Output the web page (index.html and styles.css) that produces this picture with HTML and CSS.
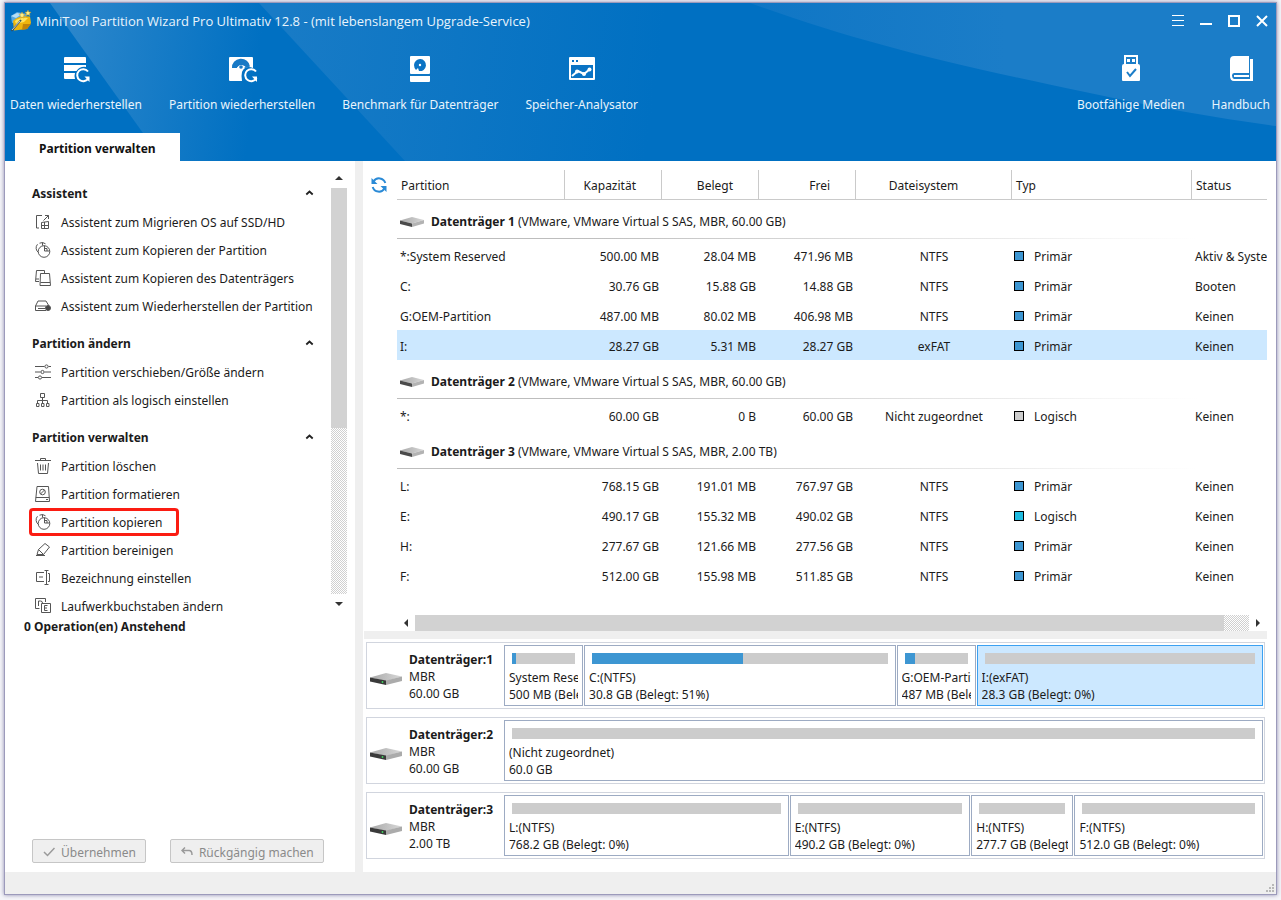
FILE: index.html
```html
<!DOCTYPE html>
<html lang="de">
<head>
<meta charset="utf-8">
<meta name="viewport" content="width=device-width, initial-scale=1">
<title>MiniTool Partition Wizard Pro Ultimativ 12.8</title>
<link rel="stylesheet" href="styles.css">
</head>
<body>
<svg class="defs" aria-hidden="true">
  <defs>
    <linearGradient id="diskTop" x1="0" x2="1" y1="0" y2="0"><stop offset="0" stop-color="#a8a8a8"/><stop offset="1" stop-color="#d8d8d8"/></linearGradient>
    <symbol id="disk" viewBox="0 0 32 14">
      <path d="M0 5.500 16 1 32 4.500 16 9z" fill="url(#diskTop)"/>
      <path d="M0 5.500 16 8.500V13L0 9.500z" fill="#3a3a3a"/>
      <path d="M16 8.500 32 4.500V9L16 13z" fill="#ababab"/>
      <path d="M12.500 9v2" stroke="#3fc65a" stroke-width="1.500"/>
    </symbol>
    <symbol id="drive" viewBox="0 0 26 12">
      <path d="M1 4.500 13 1 25 4 13 7.500z" fill="url(#diskTop)"/>
      <path d="M1 4.500 13 7.500V11L1 8z" fill="#4a4a4a"/>
      <path d="M13 7.500 25 4V7.500L13 11z" fill="#b3b3b3"/>
    </symbol>
    <symbol id="copy" viewBox="0 0 16 16">
      <path d="M3.500 10.500A5.500 5.500 0 0 1 2.500 2.300M4.500 1.200A5.500 5.500 0 0 1 10.500 1.800M7.500.500v3"/>
      <circle cx="9" cy="9.500" r="5.800"/><path d="M9.500 3.700V9h5.200M9.500 6.500H12V9"/>
    </symbol>
    <symbol id="chev" viewBox="0 0 8 6"><path d="M.8 4.500 4 1.500 7.200 4.500" fill="none" stroke="#222" stroke-width="1.800"/></symbol>
  </defs>
</svg>
<div class="window">
  <header class="header">
    <svg class="header-art" viewBox="0 0 1271 158" preserveAspectRatio="none" aria-hidden="true">
      <defs>
        <linearGradient id="b1" gradientUnits="userSpaceOnUse" x1="60" y1="60" x2="250" y2="85"><stop offset="0" stop-color="#2b86cb"/><stop offset="1" stop-color="#0070c2"/></linearGradient>
        <linearGradient id="b2" gradientUnits="userSpaceOnUse" x1="280" y1="40" x2="650" y2="90"><stop offset="0" stop-color="#187bc6"/><stop offset="1" stop-color="#0070c2"/></linearGradient>
        <linearGradient id="b3" gradientUnits="userSpaceOnUse" x1="745" y1="0" x2="1000" y2="0"><stop offset="0" stop-color="#0f76c5"/><stop offset="1" stop-color="#1b7dc8"/></linearGradient>
      </defs>
      <path d="M45 0H254L400 158H158z" fill="url(#b1)"/>
      <path d="M254 0H800V158H400z" fill="url(#b2)"/>
      <path d="M745 0C850 38 940 60 1080 89Q1180 111 1271 123V0z" fill="url(#b3)"/>
    </svg>
    <div class="titlebar">
      <svg class="app-icon" width="22" height="22" viewBox="0 0 22 22" aria-hidden="true">
        <path d="M1 6 7 2l10 2-3 6-12 3z" fill="#5aa9df"/><path d="M1 6 7 3l5 1-6 4z" fill="#b5def5"/>
        <path d="M3 11Q8 5 20 6.500L21 13 17 19 4 20.500z" fill="#eeb50d"/><path d="M5 11Q10 7 18 8l-4 4-8 2z" fill="#ffe35b"/><path d="M13 14h8l-4 5-5 1z" fill="#c18409"/>
        <path d="M1.500 21 11 10" stroke="#345064" stroke-width="1.800"/><path d="M2 20 10 11" stroke="#fff" stroke-width=".7"/>
        <path d="m12 2 1 2 2 .3-1.500 1.700.5 2-2-1-2 1 .5-2L9 4.300l2-.3zM18 0l.8 2 2.200.2-1.500 1.500.5 2-2-1-2 1 .5-2L15 2.200l2-.2z" fill="#ffef86" stroke="#b89121" stroke-width=".5"/>
      </svg>
      <h1 class="title">MiniTool Partition Wizard Pro Ultimativ 12.8 - (mit lebenslangem Upgrade-Service)</h1>
      <div class="controls">
        <button type="button" aria-label="Menü"><svg width="12" height="12" viewBox="0 0 12 12"><path d="M0 .5h12M0 5.500h12M0 10.500h12" stroke="#fff"/></svg></button>
        <button type="button" aria-label="Minimieren"><svg width="12" height="12" viewBox="0 0 12 12"><path d="M0 9h12" stroke="#fff" stroke-width="2"/></svg></button>
        <button type="button" aria-label="Maximieren"><svg width="12" height="12" viewBox="0 0 12 12"><path d="M1 1h10v10H1z" fill="none" stroke="#fff" stroke-width="2"/></svg></button>
        <button type="button" aria-label="Schließen"><svg width="12" height="12" viewBox="0 0 12 12"><path d="m1 1 10 10M11 1 1 11" stroke="#fff" stroke-width="2"/></svg></button>
      </div>
    </div>
    <nav class="toolbar">
      <button class="tool" type="button">
        <svg width="30" height="30" viewBox="0 0 30 30"><path d="M3 4q0-1 1-1h20q1 0 1 1v5H3zM3 11h22v2q-6-1-9.500 4H3zM3 19h11q-1 3 0 6H4q-1 0-1-1z" fill="#fff"/><path d="M27 17.500A6 6 0 1 0 27.500 24" fill="none" stroke="#fff" stroke-width="2"/><path d="M23.500 22.500h5V28z" fill="#fff"/></svg>
        <span>Daten wiederherstellen</span></button>
      <button class="tool" type="button">
        <svg width="32" height="30" viewBox="0 0 32 30"><path d="M3 4q0-1 1-1h22q1 0 1 1v10q-8-3-11 4-1 4 0 9H4q-1 0-1-1z" fill="#fff"/><path d="M6 14A9 8.500 0 0 1 24 12.500L19 14Q15 8 11 14z" fill="#1879c5"/><path d="M10.500 14.500Q14 8.500 19.500 12.500L16 15z" fill="#fff"/><circle cx="15" cy="13" r="1.800" fill="#1879c5"/><path d="M30 17.500A6 6 0 1 0 30.500 24" fill="none" stroke="#fff" stroke-width="2"/><path d="M26 22.500h5V28z" fill="#fff"/></svg>
        <span>Partition wiederherstellen</span></button>
      <button class="tool" type="button">
        <svg width="30" height="30" viewBox="0 0 30 30"><path d="M5 3q0-1 1-1h18q1 0 1 1v16q0 1-1 1H6q-1 0-1-1z" fill="#fff"/><path d="M5 22h20v5q0 1-1 1H6q-1 0-1-1z" fill="#fff"/><path d="M9 11a6 6 0 1 1 5 6l-1-3-2 2q-2-2-2-5z" fill="#0b73c4"/><circle cx="15" cy="11" r="1.200" fill="#fff"/></svg>
        <span>Benchmark für Datenträger</span></button>
      <button class="tool" type="button">
        <svg width="30" height="30" viewBox="0 0 30 30"><path d="M2 4q0-1 1-1h24q1 0 1 1v21q0 1-1 1H3q-1 0-1-1z" fill="#fff"/><path d="M4 11h22v13H4zM5 6h2v2H5zM9 6h2v2H9z" fill="#0a73c4"/><path d="m5 22 6-5 6 3 6-5" fill="none" stroke="#fff" stroke-width="2"/><circle cx="10" cy="17.500" r="2" fill="#fff"/><circle cx="17" cy="20" r="2" fill="#fff"/><circle cx="22.500" cy="15.500" r="2" fill="#fff"/></svg>
        <span>Speicher-Analysator</span></button>
      <span class="spring"></span>
      <button class="tool" type="button">
        <svg width="30" height="30" viewBox="0 0 30 30"><path d="M9 10V2h12v8" fill="none" stroke="#fff" stroke-width="2"/><path d="M11 5h3v3h-3zM16 5h3v3h-3zM6 12q0-2 2-2h14q2 0 2 2v14q0 1-1 1H7q-1 0-1-1z" fill="#fff"/><path d="m11 18 3 4 6-7" fill="none" stroke="#1b7dc8" stroke-width="2"/></svg>
        <span>Bootfähige Medien</span></button>
      <button class="tool" type="button">
        <svg width="30" height="30" viewBox="0 0 30 30"><path d="M4 6q0-4 4-4h15v17H8q-2 0-2 2.500T8 25h16V5h3v22H8q-4 0-4-5z" fill="#fff"/><path d="M8 22h15" stroke="#fff" stroke-width="2"/></svg>
        <span>Handbuch</span></button>
    </nav>
    <div class="tabs"><button class="tab" type="button">Partition verwalten</button></div>
  </header>

  <div class="body">
    <aside class="sidebar">
      <div class="scroll">
        <div class="groups">
          <h2 class="group">Assistent<svg width="9" height="6"><use href="#chev"/></svg></h2>
          <button class="action" type="button"><svg class="ico" viewBox="0 0 16 16"><path d="M7 1.500H1.500v12.500H4M8.500 6.500l5-5M10 1.500h3.500V5M6.500 8.500l7-1v7h-7zM6.500 11.500h7M9.500 8v6.500"/></svg>Assistent zum Migrieren OS auf SSD/HD</button>
          <button class="action" type="button"><svg class="ico"><use href="#copy"/></svg>Assistent zum Kopieren der Partition</button>
          <button class="action" type="button"><svg class="ico" viewBox="0 0 16 16"><path d="M4 11.500H.5L1.500.5h8V3M1 9h3M5.500 3.500h9l1 12H5zM5.500 12.500h9.500"/></svg>Assistent zum Kopieren des Datenträgers</button>
          <button class="action" type="button"><svg class="ico" viewBox="0 0 16 16"><path d="m.5 8 2.500-5h8l3 5M.5 8v4.500H11M.5 8H11M3 10.500h7"/><circle cx="13" cy="10" r="2.500" fill="#444"/></svg>Assistent zum Wiederherstellen der Partition</button>
          <h2 class="group">Partition ändern<svg width="9" height="6"><use href="#chev"/></svg></h2>
          <button class="action" type="button"><svg class="ico" viewBox="0 0 16 16"><path d="M0 2.500h9.500M13.500 2.500H16M0 8h5.500M9.500 8H16M0 13.500h3M7 13.500h9"/><circle cx="11.500" cy="2.500" r="1.600"/><circle cx="7.500" cy="8" r="1.600"/><circle cx="5" cy="13.500" r="1.600"/></svg>Partition verschieben/Größe ändern</button>
          <button class="action" type="button"><svg class="ico" viewBox="0 0 16 16"><path d="M5.500 1.500h4v4h-4zM7.500 5.500v6M2.500 11.500v-3h10v3M1.500 11.500h2.500v3H1.500zM6.500 11.500H9v3H6.500zM11.500 11.500H14v3h-2.500z"/></svg>Partition als logisch einstellen</button>
          <h2 class="group">Partition verwalten<svg width="9" height="6"><use href="#chev"/></svg></h2>
          <button class="action" type="button"><svg class="ico" viewBox="0 0 16 16"><path d="M0 2.500h16M5.500 2V.500h5V2M2.500 5l1 10.500h9l1-10.500M5.500 6.500v6M8 6.500v6M10.500 6.500v6"/></svg>Partition löschen</button>
          <button class="action" type="button"><svg class="ico" viewBox="0 0 16 16"><path d="M2 .5h11.500l1 15H.5zM.8 11.500h13.500M11 13.500h2M5.500 8l4-4"/><circle cx="7.500" cy="6" r="2.800"/></svg>Partition formatieren</button>
          <button class="action marked" type="button"><svg class="ico"><use href="#copy"/></svg>Partition kopieren</button>
          <button class="action" type="button"><svg class="ico" viewBox="0 0 16 16"><path d="m3.500 7.500 6.500-6 4.500 3.500-6 7.500zM3.500 7.500l-1.500 5h6.500M1 13.500h9"/></svg>Partition bereinigen</button>
          <button class="action" type="button"><svg class="ico" viewBox="0 0 16 16"><path d="M9 2.500H1.500v9H9M4 7h4M11.500 1v13M9.500.500h4M9.500 14.500h4M13 3.500h1.500v8H13"/></svg>Bezeichnung einstellen</button>
          <button class="action" type="button"><svg class="ico" viewBox="0 0 16 16"><path d="M4.500 10.500H.5V.500h10V4M3.500 3v5M3.500 3h2q2 0 2 2M6.500 5.500h9v9h-9zM12.500 7.500h-3v5h3M9.500 10h2.500"/></svg>Laufwerkbuchstaben ändern</button>
        </div>
        <div class="vbar"><button type="button" aria-label="Nach oben"><svg width="8" height="4"><path d="M0 4 4 0l4 4z"/></svg></button><div class="track"><div class="thumb"></div></div><button type="button" aria-label="Nach unten"><svg width="8" height="4"><path d="M0 0h8L4 4z"/></svg></button></div>
      </div>
      <p class="pending">0 Operation(en) Anstehend</p>
      <div class="buttons">
        <button class="btn" type="button" disabled><svg width="12" height="10" viewBox="0 0 12 10"><path d="m1 5 3.500 3.500L11.500 1"/></svg>Übernehmen</button>
        <button class="btn" type="button" disabled><svg width="12" height="10" viewBox="0 0 12 10"><path d="M4 .5 1 3.500l3 3M1 3.500h7q3 0 3 4.500"/></svg>Rückgängig machen</button>
      </div>
    </aside>

    <main class="main">
      <section class="list">
        <button class="refresh" type="button" aria-label="Aktualisieren"><svg width="16" height="16" viewBox="0 0 16 16"><path d="M14.300 6A6.500 6.500 0 0 0 2.500 4.500M1.700 10a6.500 6.500 0 0 0 11.800 1.500" fill="none" stroke="#2a8ad6" stroke-width="2"/><path d="M.500 1v6h6zM15.500 15V9h-6z" fill="#2a8ad6"/></svg></button>
        <div class="table-wrap">
        <table class="table">
          <colgroup><col class="c-name"><col class="c-num"><col class="c-num"><col class="c-num"><col class="c-fs"><col class="c-type"><col></colgroup>
          <thead><tr><th>Partition</th><th class="num">Kapazität</th><th class="num">Belegt</th><th class="num">Frei</th><th class="fs">Dateisystem</th><th>Typ</th><th>Status</th></tr></thead>
          <tbody>
            <tr class="disk-row"><td colspan="7"><div class="disk-title"><svg width="26" height="12"><use href="#drive"/></svg><span><b>Datenträger 1</b> (VMware, VMware Virtual S SAS, MBR, 60.00 GB)</span></div></td></tr>
            <tr><td>*:System Reserved</td><td class="num">500.00 MB</td><td class="num">28.04 MB</td><td class="num">471.96 MB</td><td class="fs">NTFS</td><td><i class="sw"></i>Primär</td><td>Aktiv &amp; System</td></tr>
            <tr><td>C:</td><td class="num">30.76 GB</td><td class="num">15.88 GB</td><td class="num">14.88 GB</td><td class="fs">NTFS</td><td><i class="sw"></i>Primär</td><td>Booten</td></tr>
            <tr><td>G:OEM-Partition</td><td class="num">487.00 MB</td><td class="num">80.02 MB</td><td class="num">406.98 MB</td><td class="fs">NTFS</td><td><i class="sw"></i>Primär</td><td>Keinen</td></tr>
            <tr class="selected"><td>I:</td><td class="num">28.27 GB</td><td class="num">5.31 MB</td><td class="num">28.27 GB</td><td class="fs">exFAT</td><td><i class="sw"></i>Primär</td><td>Keinen</td></tr>
            <tr class="disk-row"><td colspan="7"><div class="disk-title"><svg width="26" height="12"><use href="#drive"/></svg><span><b>Datenträger 2</b> (VMware, VMware Virtual S SAS, MBR, 60.00 GB)</span></div></td></tr>
            <tr><td>*:</td><td class="num">60.00 GB</td><td class="num">0 B</td><td class="num">60.00 GB</td><td class="fs">Nicht zugeordnet</td><td><i class="sw free"></i>Logisch</td><td>Keinen</td></tr>
            <tr class="disk-row"><td colspan="7"><div class="disk-title"><svg width="26" height="12"><use href="#drive"/></svg><span><b>Datenträger 3</b> (VMware, VMware Virtual S SAS, MBR, 2.00 TB)</span></div></td></tr>
            <tr><td>L:</td><td class="num">768.15 GB</td><td class="num">191.01 MB</td><td class="num">767.97 GB</td><td class="fs">NTFS</td><td><i class="sw"></i>Primär</td><td>Keinen</td></tr>
            <tr><td>E:</td><td class="num">490.17 GB</td><td class="num">155.32 MB</td><td class="num">490.02 GB</td><td class="fs">NTFS</td><td><i class="sw logical"></i>Logisch</td><td>Keinen</td></tr>
            <tr><td>H:</td><td class="num">277.67 GB</td><td class="num">121.66 MB</td><td class="num">277.56 GB</td><td class="fs">NTFS</td><td><i class="sw"></i>Primär</td><td>Keinen</td></tr>
            <tr><td>F:</td><td class="num">512.00 GB</td><td class="num">155.98 MB</td><td class="num">511.85 GB</td><td class="fs">NTFS</td><td><i class="sw"></i>Primär</td><td>Keinen</td></tr>
          </tbody>
        </table>
        </div>
      </section>
      <div class="hbar"><button type="button" aria-label="Nach links"><svg width="4" height="8"><path d="M4 0v8L0 4z"/></svg></button><div class="track"><div class="thumb"></div></div><button type="button" aria-label="Nach rechts"><svg width="4" height="8"><path d="M0 0v8l4-4z"/></svg></button></div>
      <div class="split"></div>
      <section class="maps">
        <div class="map">
          <svg class="map-icon" width="32" height="14"><use href="#disk"/></svg>
          <div class="map-info"><b>Datenträger:1</b><span>MBR</span><span>60.00 GB</span></div>
          <div class="parts">
            <div class="part" style="flex-grow:69"><div class="use"><div style="width:6%"></div></div><span>System Reserved</span><span>500 MB (Belegt: 5%)</span></div>
            <div class="part" style="flex-grow:301"><div class="use"><div style="width:51%"></div></div><span>C:(NTFS)</span><span>30.8 GB (Belegt: 51%)</span></div>
            <div class="part" style="flex-grow:69"><div class="use"><div style="width:16%"></div></div><span>G:OEM-Partition</span><span>487 MB (Belegt: 16%)</span></div>
            <div class="part active" style="flex-grow:276"><div class="use"></div><span>I:(exFAT)</span><span>28.3 GB (Belegt: 0%)</span></div>
          </div>
        </div>
        <div class="map">
          <svg class="map-icon" width="32" height="14"><use href="#disk"/></svg>
          <div class="map-info"><b>Datenträger:2</b><span>MBR</span><span>60.00 GB</span></div>
          <div class="parts">
            <div class="part" style="flex-grow:1"><div class="use"></div><span>(Nicht zugeordnet)</span><span>60.0 GB</span></div>
          </div>
        </div>
        <div class="map">
          <svg class="map-icon" width="32" height="14"><use href="#disk"/></svg>
          <div class="map-info"><b>Datenträger:3</b><span>MBR</span><span>2.00 TB</span></div>
          <div class="parts">
            <div class="part" style="flex-grow:274"><div class="use"></div><span>L:(NTFS)</span><span>768.2 GB (Belegt: 0%)</span></div>
            <div class="part" style="flex-grow:170"><div class="use"></div><span>E:(NTFS)</span><span>490.2 GB (Belegt: 0%)</span></div>
            <div class="part" style="flex-grow:92"><div class="use"></div><span>H:(NTFS)</span><span>277.7 GB (Belegt: 0%)</span></div>
            <div class="part" style="flex-grow:178"><div class="use"></div><span>F:(NTFS)</span><span>512.0 GB (Belegt: 0%)</span></div>
          </div>
        </div>
      </section>
    </main>
  </div>
  <footer class="statusbar"><svg width="8" height="8" viewBox="0 0 8 8" aria-hidden="true"><path d="M6 0h2v2H6zM3 3h2v2H3zM6 3h2v2H6zM0 6h2v2H0zM3 6h2v2H3zM6 6h2v2H6z" fill="#b8b8b8"/></svg></footer>
</div>
</body>
</html>
```
FILE: styles.css
```css
* { box-sizing: border-box; }

body {
  margin: 0;
  padding: 3px 5px 6px;
  min-height: 100vh;
  display: flex;
  background: #f4f4f8;
  color: #1b1b1b;
  font: 12px/17px "Noto Sans", "Open Sans", sans-serif;
}

button {
  margin: 0;
  padding: 0;
  border: 0;
  background: none;
  color: inherit;
  font: inherit;
}

svg { display: block; flex: none; }
.defs { position: absolute; width: 0; height: 0; }

.window {
  flex: 1;
  min-width: 0;
  display: flex;
  flex-direction: column;
  background: #fff;
  box-shadow: 0 0 0 1px #9c9abb, 0 0 4px 1px #8e8cb0;
}

/* Header */
.header {
  position: relative;
  display: flex;
  flex-direction: column;
  background: #0070c2;
  color: #e9f4fc;
}
.header-art {
  position: absolute;
  inset: 0;
  width: 100%;
  height: 100%;
}
.titlebar, .toolbar, .tabs { position: relative; display: flex; }
.titlebar { height: 36px; align-items: center; padding: 0 8px 0 5px; gap: 4px; }
.title {
  flex: 1;
  margin: 0;
  font: 400 13px/17px "Open Sans", "Noto Sans", sans-serif;
  white-space: nowrap;
}
.controls { display: flex; gap: 16px; }
.toolbar { padding: 15px 6px 0 5px; gap: 27px; }
.tool {
  display: flex;
  flex-direction: column;
  align-items: center;
  gap: 12px;
  white-space: nowrap;
}
.spring { flex: 1; }
.tabs { padding: 20px 10px 0; }
.tab {
  height: 28px;
  padding: 2px 24px 0;
  background: #fff;
  color: #111;
  font-weight: 700;
}

/* Sidebar */
.body { flex: 1; display: flex; min-height: 0; }
.sidebar { flex: none; width: 350px; display: flex; flex-direction: column; }
.scroll { display: flex; height: 455px; overflow: hidden; }
.groups { flex: 1; min-width: 0; padding-top: 9px; }
.group {
  display: flex;
  align-items: center;
  justify-content: space-between;
  height: 38px;
  margin: 0;
  padding: 8px 17px 0 27px;
  font-size: 12px;
}
.action {
  display: flex;
  align-items: center;
  gap: 10px;
  height: 28px;
  margin-left: 24px;
  padding: 0 14px 0 3px;
  border: 3px solid transparent;
  border-radius: 4px;
  white-space: nowrap;
}
.marked { border-color: #fb1c12; }
.ico { width: 16px; height: 16px; fill: none; stroke: #555; }
.vbar { flex: none; width: 16px; margin: 7px 8px 2px 0; display: flex; flex-direction: column; }
.vbar button { height: 20px; display: grid; place-items: center; }
.vbar svg, .hbar svg { fill: #333; }
.track {
  flex: 1;
  background: repeating-conic-gradient(#d0d0d0 0 25%, #fff 0 50%) 0 0 / 2px 2px;
}
.thumb { background: #d2d2d2; }
.vbar .thumb { height: 59%; }
.pending { margin: 0; padding: 2px 19px; font-weight: 700; }
.buttons { display: flex; gap: 24px; margin-top: auto; padding: 0 27px 9px; }
.btn {
  display: flex;
  align-items: center;
  gap: 6px;
  height: 24px;
  padding: 2px 9px 0 10px;
  border: 1px solid #c6c6c6;
  border-radius: 2px;
  background: #efefef;
  color: #8a8a8a;
  white-space: nowrap;
}
.btn svg { fill: none; stroke: #9a9a9a; stroke-width: 1.5; }

/* Partition list */
.main {
  flex: 1;
  min-width: 0;
  display: flex;
  flex-direction: column;
  border-left: 8px solid #efefef;
}
.list { flex: 1; display: flex; padding: 9px 9px 0 8px; }
.refresh { width: 16px; height: 30px; display: grid; place-items: center; margin-right: 10px; }
.table-wrap { flex: 1; min-width: 0; overflow: hidden; }
.table {
  width: 100%;
  table-layout: fixed;
  border-collapse: separate;
  border-spacing: 0;
}
.c-name { width: 168px; }
.c-num { width: 97px; }
.c-fs { width: 156px; }
.c-type { width: 180px; }
.table th {
  height: 30px;
  padding: 2px 4px 0;
  border-right: 1px solid #cacaca;
  border-bottom: 1px solid #cacaca;
  font-weight: 400;
  text-align: left;
}
.table th:last-child { border-right: 0; }
.table th.num { padding-right: 25px; text-align: right; }
.table th.fs { padding-right: 24px; text-align: center; }
.table td {
  height: 30px;
  padding: 2px 3px 0;
  overflow: hidden;
  white-space: nowrap;
}
.table td:nth-child(6) { padding-left: 2px; }
.table td.num { text-align: right; }
.table td.fs { text-align: center; }
.table .disk-row td { height: 40px; padding: 0; vertical-align: top; }
.disk-title {
  display: flex;
  align-items: center;
  gap: 6px;
  height: 39px;
  padding: 4px 0 0 2px;
  background: linear-gradient(90deg, #bdbdbd 0 20%, #fff 92%) bottom / 100% 1px no-repeat;
}
.selected td { background: #cce8ff; }
.sw {
  display: inline-block;
  width: 10px;
  height: 10px;
  margin-right: 10px;
  border: 1px solid #000;
  background: #3d96d2;
}
.sw.free { background: #cdcdcd; }
.sw.logical { background: #1fbbe0; }

.hbar { display: flex; height: 16px; margin: 0 9px 0 34px; }
.hbar button { width: 18px; display: grid; place-items: center; }
.hbar .thumb { width: 97%; height: 100%; }
.split { height: 8px; margin: 0 9px 0 1px; background: #efefef; }

/* Disk map */
.maps { display: flex; flex-direction: column; gap: 8px; padding: 3px 11px 13px 3px; }
.map { display: flex; height: 67px; padding: 2px 1px 2px 3px; border: 1px solid #d1d5de; }
.map-icon { align-self: center; margin: 6px 7px 0 0; }
.map-info { width: 95px; padding-top: 6px; display: flex; flex-direction: column; white-space: nowrap; }
.parts { flex: 1; min-width: 0; display: flex; gap: 1px; }
.part {
  flex: 1 1 0;
  min-width: 0;
  display: flex;
  flex-direction: column;
  padding: 7px 4px 0;
  border: 1px solid #9dabc3;
}
.part span { overflow: hidden; white-space: nowrap; }
.use { height: 11px; margin: 0 3px 5px; background: #ccc; }
.use div { height: 100%; background: #3d96d2; }
.active { background: #cce8ff; border-color: #3ba1f2; }

.statusbar {
  display: flex;
  justify-content: flex-end;
  align-items: flex-end;
  height: 22px;
  padding: 2px;
  background: #efefef;
}
```
